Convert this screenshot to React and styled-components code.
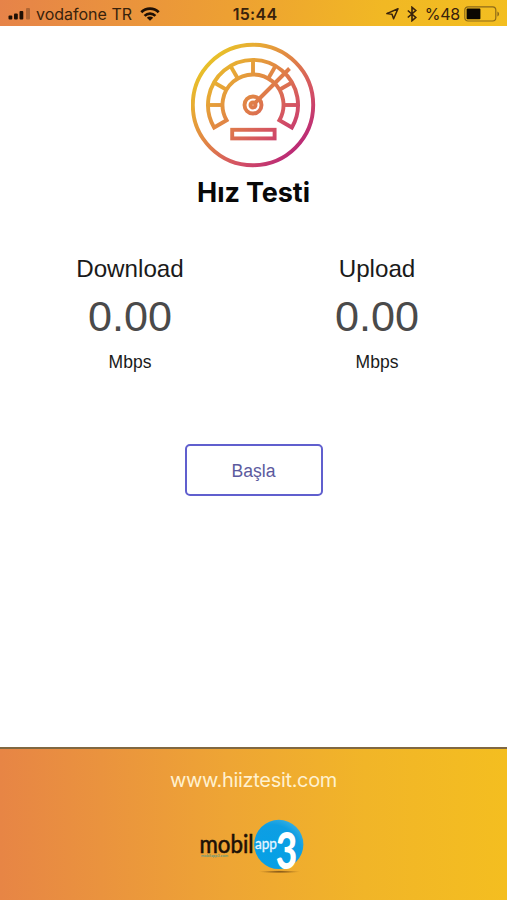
import React, { useState } from 'react';
import styled, { createGlobalStyle } from 'styled-components';

const GlobalStyle = createGlobalStyle`
  body {
    margin: 0;
    background-color: #FFFFFF;
  }
  * {
    box-sizing: border-box;
  }
`

const Page = styled.div`
  width: 100%;
  height: 900px;
  background-color: #FFFFFF;
  display: flex;
  flex-direction: column;
  align-items: center;
  overflow: hidden;
  font-family: "Liberation Sans", Arial, sans-serif;
`

const StatusBar = styled.header`
  width: 100%;
  height: 26px;
  flex-shrink: 0;
  padding: 2px 7px 0 8px;
  display: grid;
  grid-template-columns: 1fr auto 1fr;
  align-items: center;
  background: linear-gradient(100deg, #E68349 0%, #EDA033 45%, #F1B824 75%, #F3BE20 100%);
  color: #38220C;
  font-family: Inter, sans-serif;
  font-size: 16px;
  line-height: 22px;
`

const StatusGroup = styled.div`
  display: flex;
  align-items: center;
  justify-content: ${(props) => (props.$end ? 'flex-end' : 'flex-start')};
`

const Carrier = styled.span`
  margin: 0 8px 0 5px;
`

const Clock = styled.span`
  font-weight: 600;
  letter-spacing: 0.3px;
  padding-left: 2px;
`

const Battery = styled.span`
  margin: 0 4px 0 8px;
  letter-spacing: -0.2px;
`

const Main = styled.main`
  width: 100%;
  flex: 1;
  display: flex;
  flex-direction: column;
  align-items: center;
  padding-top: 16px;
`

const Title = styled.h1`
  margin: 7px 0 0;
  font-family: Inter, sans-serif;
  font-size: 27px;
  font-weight: 700;
  line-height: 36px;
  letter-spacing: -0.1px;
  color: #080808;
`

const Results = styled.div`
  width: 494px;
  display: flex;
  margin-top: 43px;
`

const Result = styled.div`
  flex: 1;
  display: flex;
  flex-direction: column;
  align-items: center;
  color: #1A1A1A;
`

const Label = styled.span`
  font-size: 24.2px;
  line-height: 30px;
`

const Value = styled.span`
  margin-top: 7px;
  font-size: 43.2px;
  line-height: 50px;
  color: #4A4A4A;
`

const Unit = styled.span`
  margin-top: 10px;
  font-size: 17.5px;
  line-height: 22px;
`

const StartButton = styled.button`
  width: 138px;
  height: 52px;
  margin-top: 71px;
  padding: 2px 0 0;
  border: 2px solid #605FCE;
  border-radius: 5px;
  background-color: #FFFFFF;
  color: #5C5A9E;
  font-family: inherit;
  font-size: 17.6px;
  cursor: pointer;
`

const Footer = styled.footer`
  width: 100%;
  height: 153px;
  flex-shrink: 0;
  border-top: 2px solid #806842;
  padding-top: 18px;
  display: flex;
  flex-direction: column;
  align-items: center;
  background: linear-gradient(90deg, #E78545 0%, #EA933E 20%, #EEA534 45%, #F1B528 72%, #F4BE20 100%);
`

const SiteLink = styled.a`
  font-family: Inter, sans-serif;
  font-size: 20px;
  line-height: 26px;
  letter-spacing: -0.32px;
  color: #FFF1CF;
  text-decoration: none;
`

const LogoSvg = styled.svg`
  display: block;
  overflow: visible;
  margin-top: 24px;
`

const Signal = () => (
  <svg width="23" height="12" viewBox="0 0 23 12" fill="#1F1005">
    <rect x="0.5" y="7.5" width="3.8" height="4" rx="1" />
    <rect x="6" y="5.5" width="3.8" height="6" rx="1" />
    <rect x="11.5" y="3" width="3.8" height="8.5" rx="1" />
    <rect x="18" y="0" width="4" height="11.5" rx="1" opacity="0.28" />
  </svg>
)

const Wifi = () => (
  <svg width="20" height="14" viewBox="0 0 20 14" fill="none" stroke="#1F1005" strokeWidth="2.7">
    <path d="M1.3 5.3a12.2 12.2 0 0 1 17.4 0" />
    <path d="M4.6 8.9a7.6 7.6 0 0 1 10.8 0" />
    <path d="M10 13.8L6.8 10.8a4.5 4.5 0 0 1 6.4 0z" fill="#1F1005" stroke="none" />
  </svg>
)

const Location = () => (
  <svg width="14" height="14" viewBox="0 0 14 14" fill="none" stroke="#38220C" strokeWidth="1.5" strokeLinejoin="round">
    <path d="M13 1.8L1.8 6.6l5.2.6 1.6 4.6z" />
  </svg>
)

const BluetoothSvg = styled.svg`
  margin-left: 8px;
`

const Bluetooth = () => (
  <BluetoothSvg width="10" height="16" viewBox="0 0 10 16" fill="none" stroke="#38220C" strokeWidth="1.6">
    <path d="M0.8 4.5l8 7L5 14.7V1.3l3.8 3.2-8 7" />
  </BluetoothSvg>
)

const BatteryIcon = () => (
  <svg width="36" height="16" viewBox="0 0 36 16">
    <rect x="0.8" y="0.8" width="31" height="14.2" rx="3.2" fill="none" stroke="#8D6A18" strokeWidth="1.2" />
    <rect x="2.6" y="2.6" width="13.8" height="10.6" rx="0.8" fill="#0B0702" />
    <path d="M33.4 5.4c2.2.8 2.2 4.2 0 5z" fill="#8D6A18" />
  </svg>
)

const ticks = [0, 30, 60, 90, 120, 150, 180]

const Gauge = () => (
  <svg width="126" height="126" viewBox="-62 -63 126 126">
    <defs>
      <linearGradient id="gauge" gradientUnits="userSpaceOnUse" x1="-46" y1="-46" x2="46" y2="46">
        <stop offset="0" stopColor="#E8C328" />
        <stop offset="0.22" stopColor="#E7A735" />
        <stop offset="0.5" stopColor="#DF7C49" />
        <stop offset="0.75" stopColor="#D34F65" />
        <stop offset="1" stopColor="#B82677" />
      </linearGradient>
    </defs>
    <g fill="none" stroke="url(#gauge)" strokeWidth="3.9">
      <circle r="60.2" />
      <path d="M-38.9 22.5A45 45 0 1 1 38.9 22.5L26.4 15.2A30.5 30.5 0 1 0 -26.4 15.2Z" />
      {ticks.map((deg) => {
        const a = (deg * Math.PI) / 180
        const x = -Math.cos(a)
        const y = -Math.sin(a)
        return <path key={deg} d={`M${x * 30.5} ${y * 30.5}L${x * 45} ${y * 45}`} />
      })}
      <circle r="8.5" />
      <circle r="2.5" strokeWidth="4" />
      <path d="M2.5 -2.5L36.5 -36.5" />
      <rect x="-20.8" y="24.8" width="42.4" height="8.6" />
    </g>
  </svg>
)

const Logo = () => (
  <LogoSvg width="108" height="60" viewBox="0 0 108 60">
    <defs>
      <radialGradient id="ball" cx="0.35" cy="0.7" r="0.8">
        <stop offset="0" stopColor="#05A0E5" />
        <stop offset="0.75" stopColor="#0E9EE3" />
        <stop offset="1" stopColor="#3FB1E0" />
      </radialGradient>
      <radialGradient id="shadow">
        <stop offset="0" stopColor="#5F3A10" stopOpacity="0.9" />
        <stop offset="1" stopColor="#8A5A18" stopOpacity="0" />
      </radialGradient>
    </defs>
    <ellipse cx="79.5" cy="54.8" rx="21" ry="1.5" fill="url(#shadow)" />
    <circle cx="78.8" cy="27.4" r="24.6" fill="url(#ball)" />
    <text x="-0.5" y="35.8" textLength="54" lengthAdjust="spacingAndGlyphs" fontFamily="Lato, sans-serif" fontSize="25" fill="#1C1007" stroke="#1C1007" strokeWidth="0.6">mobil</text>
    <text x="1" y="40" textLength="27" lengthAdjust="spacingAndGlyphs" fontFamily="Lato, sans-serif" fontWeight="700" fontSize="4" fill="#5F9A83">mobilapp3.com</text>
    <text x="55" y="31.7" textLength="22" lengthAdjust="spacingAndGlyphs" fontFamily="Lato, sans-serif" fontSize="15" fill="#E6F6FF" stroke="#E6F6FF" strokeWidth="0.3">app</text>
    <text x="75.8" y="51.5" textLength="21.5" lengthAdjust="spacingAndGlyphs" fontFamily="Lato, sans-serif" fontWeight="900" fontSize="52" fill="#FFFFFF">3</text>
  </LogoSvg>
)

const App = () => {
  const [results] = useState([
    { label: 'Download', value: 0 },
    { label: 'Upload', value: 0 },
  ])

  return (
    <Page>
      <GlobalStyle />
      <StatusBar>
        <StatusGroup>
          <Signal />
          <Carrier>vodafone TR</Carrier>
          <Wifi />
        </StatusGroup>
        <Clock>15:44</Clock>
        <StatusGroup $end>
          <Location />
          <Bluetooth />
          <Battery>%48</Battery>
          <BatteryIcon />
        </StatusGroup>
      </StatusBar>

      <Main>
        <Gauge />
        <Title>Hız Testi</Title>
        <Results>
          {results.map((result) => (
            <Result key={result.label}>
              <Label>{result.label}</Label>
              <Value>{result.value.toFixed(2)}</Value>
              <Unit>Mbps</Unit>
            </Result>
          ))}
        </Results>
        <StartButton>Başla</StartButton>
      </Main>

      <Footer>
        <SiteLink>www.hiiztesit.com</SiteLink>
        <Logo />
      </Footer>
    </Page>
  );
};

export default App;
